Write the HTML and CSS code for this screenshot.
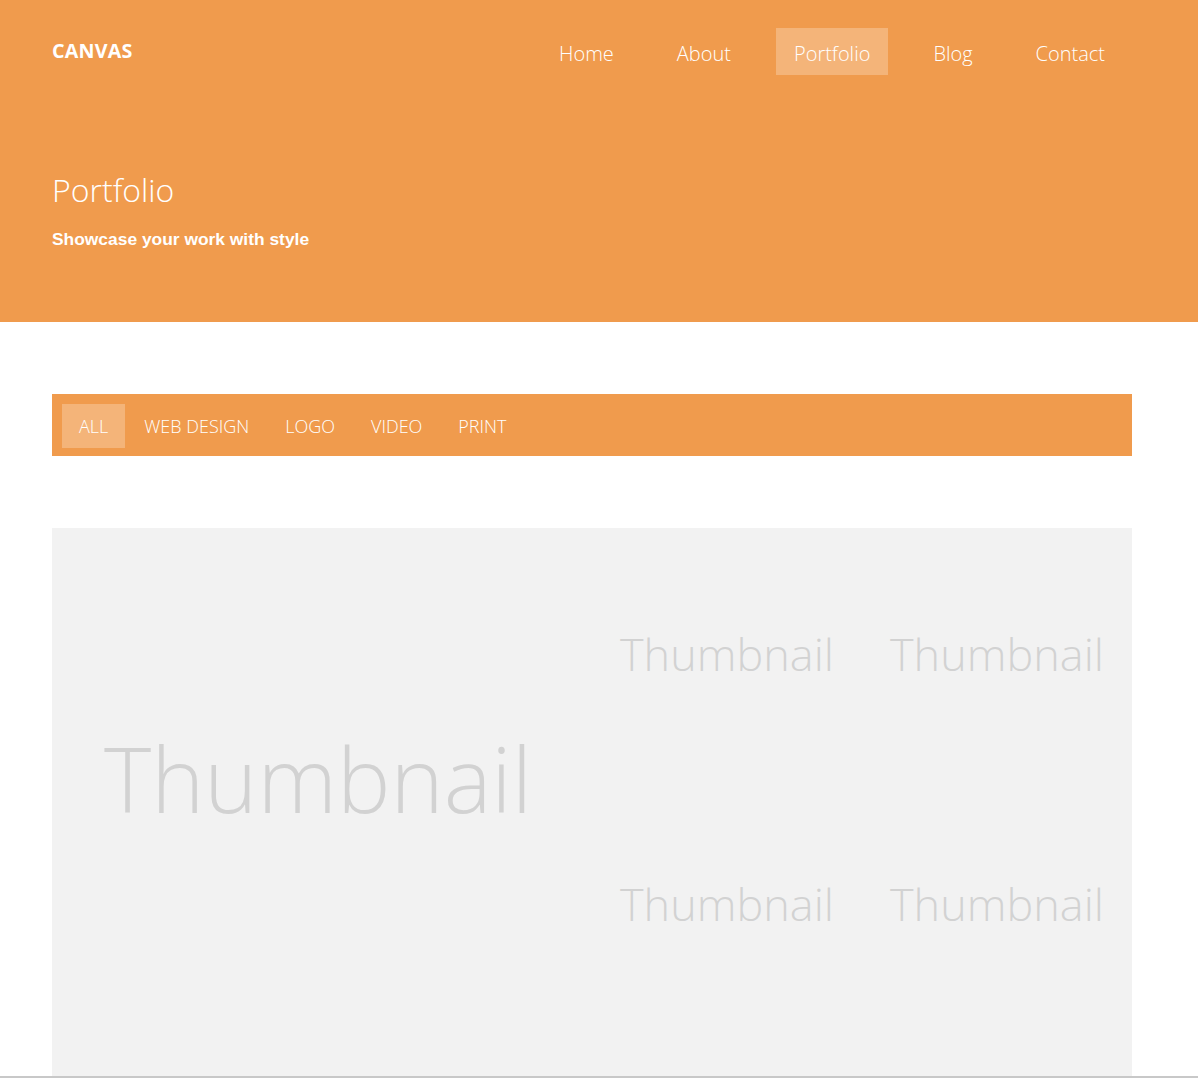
FILE: index.html
```html
<!DOCTYPE html>
<html lang="en">
<head>
<meta charset="utf-8">
<title>Portfolio</title>
<link rel="stylesheet" href="styles.css">
</head>
<body>
<header class="hero">
  <div class="container">
    <div class="topbar">
      <div class="logo">CANVAS</div>
      <nav class="nav">
        <a class="nav-item">Home</a>
        <a class="nav-item">About</a>
        <a class="nav-item active">Portfolio</a>
        <a class="nav-item">Blog</a>
        <a class="nav-item">Contact</a>
      </nav>
    </div>
    <h1 class="title">Portfolio</h1>
    <p class="subtitle">Showcase your work with style</p>
  </div>
</header>
<main class="container main">
  <div class="filters">
    <a class="filter active">ALL</a>
    <a class="filter">WEB DESIGN</a>
    <a class="filter">LOGO</a>
    <a class="filter">VIDEO</a>
    <a class="filter">PRINT</a>
  </div>
  <div class="grid">
    <div class="thumb big">Thumbnail</div>
    <div class="thumb">Thumbnail</div>
    <div class="thumb">Thumbnail</div>
    <div class="thumb">Thumbnail</div>
    <div class="thumb">Thumbnail</div>
  </div>
</main>
<div class="frame-edge"></div>
</body>
</html>
```
FILE: styles.css
```css
* { box-sizing: border-box; }
html, body { margin: 0; padding: 0; }
body {
  font-family: "Open Sans", "Liberation Sans", sans-serif;
  background: #fff;
  color: #333;
}
.container {
  width: 1080px;
  margin-left: 52px;
}
.hero {
  background: #f09b4d;
  height: 322px;
  color: #fff;
}
.topbar {
  display: flex;
  justify-content: space-between;
  align-items: flex-start;
  padding-top: 28px;
}
.logo {
  font-weight: 700;
  font-size: 19.7px;
  line-height: 46px;
  letter-spacing: 0.2px;
}
.nav {
  display: flex;
  padding-right: 9px;
}
.nav-item {
  display: block;
  font-weight: 300;
  font-size: 20px;
  line-height: 47px;
  height: 47px;
  padding: 2px 18px 0;
  margin-left: 27px;
  color: #fff;
}
.nav-item.active {
  background: rgba(255,255,255,0.25);
}
.title {
  font-weight: 300;
  font-size: 32px;
  line-height: 44px;
  margin: 93px 0 0;
}
.subtitle {
  font-family: "Liberation Sans", Arial, sans-serif;
  font-weight: 700;
  font-size: 17.4px;
  margin: 17px 0 0;
}
.main {
  padding-top: 72px;
}
.filters {
  background: #f09b4d;
  height: 62px;
  display: flex;
  align-items: center;
  padding: 2px 10px 0;
  gap: 2px;
}
.filter {
  display: block;
  color: #fff;
  font-weight: 300;
  font-size: 18px;
  line-height: 44px;
  padding: 0 17px;
}
.filter.active {
  background: rgba(255,255,255,0.25);
}
.grid {
  margin-top: 72px;
  background: #f2f2f2;
  display: grid;
  grid-template-columns: repeat(4, 270px);
  grid-template-rows: repeat(2, 250px);
  height: 560px;
}
.thumb {
  display: flex;
  align-items: center;
  justify-content: center;
  font-weight: 300;
  font-size: 45px;
  color: #d2d2d2;
}
.thumb.big {
  grid-column: 1 / span 2;
  grid-row: 1 / span 2;
  font-size: 90px;
  padding-right: 8px;
}
.frame-edge {
  position: fixed;
  left: 0;
  right: 0;
  bottom: 0;
  height: 2px;
  background: #c8c8c8;
}
```
